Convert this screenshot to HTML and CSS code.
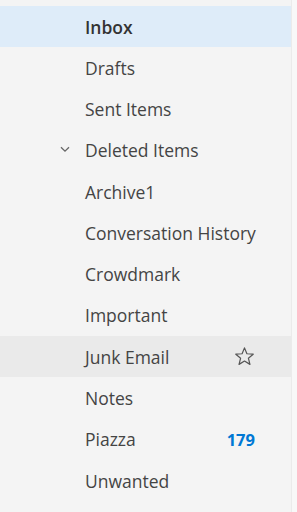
FILE: index.html
```html
<!DOCTYPE html>
<html>
<head>
<meta charset="utf-8">
<link rel="stylesheet" href="styles.css">
</head>
<body>
<nav class="pane">
  <ul class="folders">
    <li class="folder selected"><span class="name">Inbox</span></li>
    <li class="folder"><span class="name">Drafts</span></li>
    <li class="folder"><span class="name">Sent Items</span></li>
    <li class="folder"><span class="chev"><svg width="10" height="7" viewBox="0 0 10 7"><path d="M1 1.2 L5 5.2 L9 1.2" fill="none" stroke="#666" stroke-width="1.3"/></svg></span><span class="name">Deleted Items</span></li>
    <li class="folder"><span class="name">Archive1</span></li>
    <li class="folder"><span class="name">Conversation History</span></li>
    <li class="folder"><span class="name">Crowdmark</span></li>
    <li class="folder"><span class="name">Important</span></li>
    <li class="folder hover"><span class="name">Junk Email</span><span class="star"><svg width="21" height="21" viewBox="0 0 20 20"><path d="M10 1.8 L12.3 7.4 L18.3 7.8 L13.7 11.6 L15.2 17.5 L10 14.3 L4.8 17.5 L6.3 11.6 L1.7 7.8 L7.7 7.4 Z" fill="none" stroke="#555" stroke-width="1.15" stroke-linejoin="round"/></svg></span></li>
    <li class="folder"><span class="name">Notes</span></li>
    <li class="folder"><span class="name">Piazza</span><span class="count">179</span></li>
    <li class="folder"><span class="name">Unwanted</span></li>
  </ul>
</nav>
</body>
</html>
```
FILE: styles.css
```css
html, body {
  margin: 0;
  padding: 0;
  background: #f8f8f8;
}
body {
  font-family: "Open Sans", "Noto Sans", sans-serif;
  font-size: 17.5px;
  color: #444;
}
.pane {
  width: 292px;
  height: 512px;
  background: #f4f4f4;
  border-right: 1px solid #ebebeb;
  padding-top: 6px;
  box-sizing: border-box;
}
.folders {
  list-style: none;
  margin: 0;
  padding: 0;
}
.folder {
  position: relative;
  display: flex;
  align-items: center;
  height: 41.27px;
  padding-left: 85px;
  padding-right: 37px;
}
.folder.selected {
  background: #deecf9;
}
.folder.selected .name {
  font-weight: 600;
  color: #333;
}
.folder.hover {
  background: #eaeaea;
}
.name {
  flex: 1;
  white-space: nowrap;
}
.chev {
  position: absolute;
  left: 60px;
  top: 50%;
  margin-top: -4px;
  display: flex;
}
.star {
  display: flex;
  margin-right: -1px;
}
.count {
  color: #0078d4;
  font-weight: 700;
  font-size: 16.5px;
  margin-right: -1px;
}
```
